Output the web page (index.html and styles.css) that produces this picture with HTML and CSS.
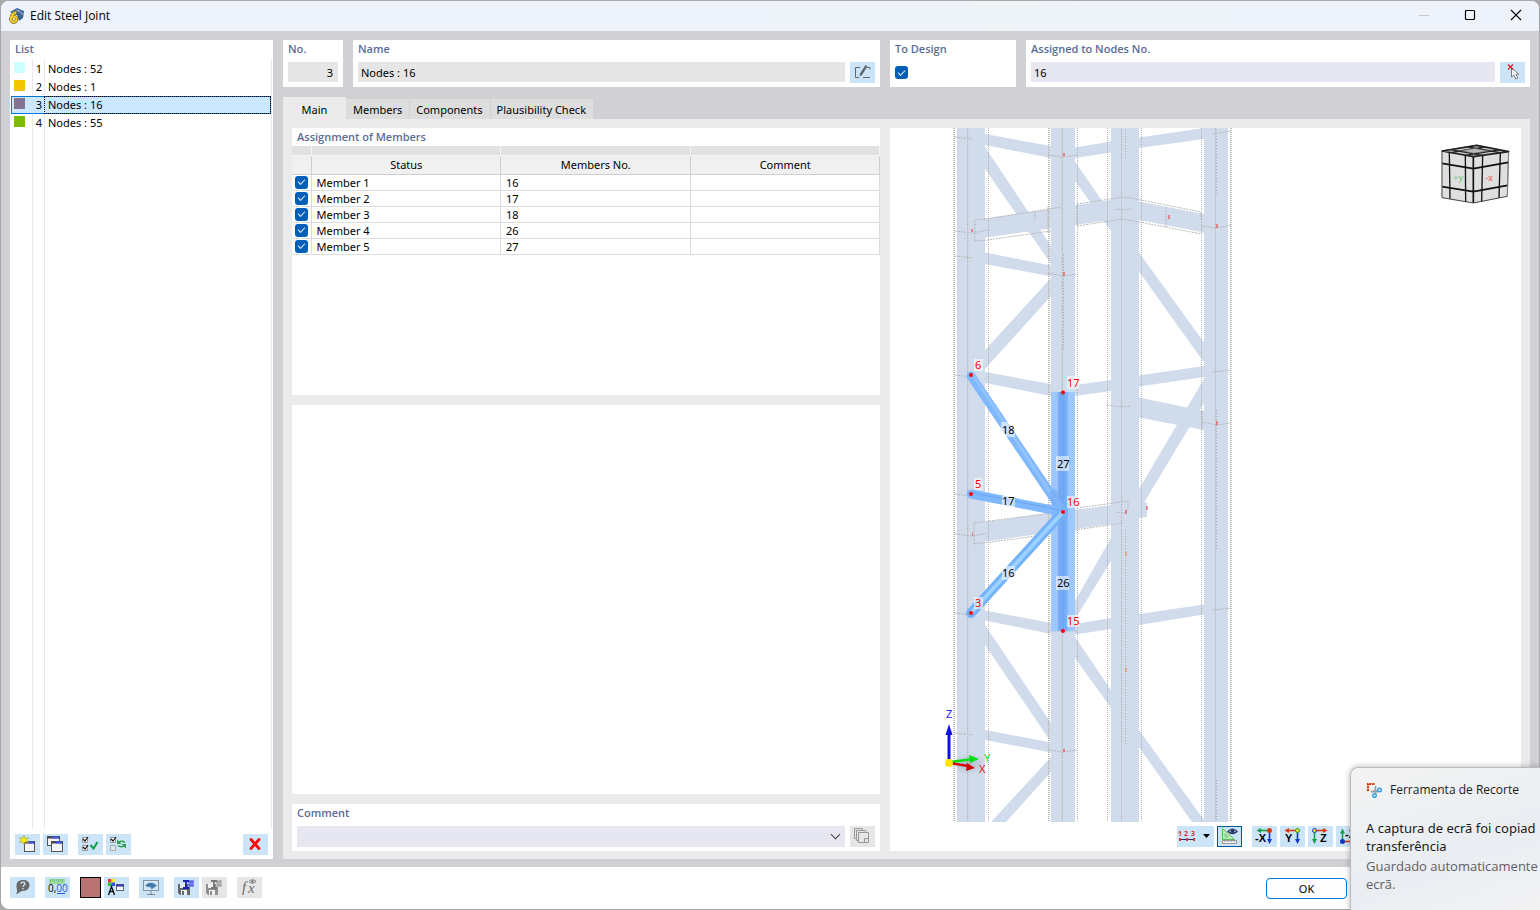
FILE: index.html
```html
<!DOCTYPE html>
<html lang="en">
<head>
<meta charset="utf-8">
<title>Edit Steel Joint</title>
<link rel="stylesheet" href="styles.css">
</head>
<body>
<main class="window">
  <header class="titlebar">
    <svg class="app-icon" viewBox="0 0 16 16" aria-hidden="true">
      <path d="M1 4 8 0l7 3-1 7-4 3-2-6z" fill="#3f6390"/>
      <path d="M4 4q6-3 9 3M7 2q5 0 7 4" fill="none" stroke="#9ab8d4" stroke-width=".8"/>
      <path d="M6.500 4.500Q2 6.500 2 11" fill="none" stroke="#6b5708" stroke-width="3.200" stroke-linecap="round"/>
      <circle cx="4.800" cy="11.300" r="2.800" fill="none" stroke="#6b5708" stroke-width="3.200"/>
      <path d="M6.500 4.500Q2 6.500 2 11" fill="none" stroke="#f5cf2a" stroke-width="2" stroke-linecap="round"/>
      <circle cx="4.800" cy="11.300" r="2.800" fill="none" stroke="#f5cf2a" stroke-width="2"/>
    </svg>
    <h1 class="title">Edit Steel Joint</h1>
    <div class="window-buttons">
      <button class="win-btn" aria-label="Minimize" disabled><svg viewBox="0 0 12 12"><path d="M1 5.500h10" stroke="#c3c6cb" fill="none"/></svg></button>
      <button class="win-btn" aria-label="Maximize"><svg viewBox="0 0 12 12"><rect x="1.500" y="0.500" width="9" height="9" rx="1" stroke="#000" stroke-width="1.200" fill="none"/></svg></button>
      <button class="win-btn" aria-label="Close"><svg viewBox="0 0 12 12"><path d="M1 0l10 10M11 0 1 10" stroke="#000" stroke-width="1.100" fill="none"/></svg></button>
    </div>
  </header>

  <div class="body">
    <section class="panel list-panel">
      <h2 class="label">List</h2>
      <ul class="joint-list">
        <li class="joint"><span class="swatch cyan"></span><span class="num">1</span><span class="name">Nodes : 52</span></li>
        <li class="joint"><span class="swatch amber"></span><span class="num">2</span><span class="name">Nodes : 1</span></li>
        <li class="joint selected"><span class="swatch violet"></span><span class="num">3</span><span class="name">Nodes : 16</span></li>
        <li class="joint"><span class="swatch green"></span><span class="num">4</span><span class="name">Nodes : 55</span></li>
      </ul>
      <div class="list-tools">
        <button class="tool" aria-label="New"><svg viewBox="0 0 25 21"><rect x="9.500" y="7.500" width="10" height="10" fill="#f4f5f7" stroke="#555"/><path d="M9 8.500h11" stroke="#444" stroke-width="2"/><path d="M13 8.500h6" stroke="#4055ef" stroke-width="2"/><path d="M9 1.500l1 3 3.500-.8L11.300 6l2.200 2.500-3.500-.7L9 10.500l-1.200-2.700-3.300.7L6.500 6 4.500 3.700l3.300.7z" fill="#fff200" stroke="#9a9720" stroke-width=".6"/></svg></button>
        <button class="tool gap-after" aria-label="Copy"><svg viewBox="0 0 25 21"><rect x="4.500" y="2.500" width="12" height="9" fill="#f4f5f7" stroke="#555"/><path d="M4 3.500h13" stroke="#444" stroke-width="2"/><path d="M9 3.500h7" stroke="#4055ef" stroke-width="2"/><rect x="8.500" y="7.500" width="11" height="10" fill="#f4f5f7" stroke="#555"/><path d="M8 8.500h12" stroke="#444" stroke-width="2"/><path d="M13 8.500h6" stroke="#4055ef" stroke-width="2"/></svg></button>
        <button class="tool" aria-label="Select all"><svg viewBox="0 0 25 21"><path d="M4.500 3.500h5v5h-5zM4.500 11.500h5v5h-5z" fill="#fff" stroke="#999"/><path d="M5 5l2 2 3-4M5 13l2 2 3-4" fill="none" stroke="#111" stroke-width="1.200"/><path d="M12.500 11l3 3.500L19.500 8" fill="none" stroke="#12a04b" stroke-width="2"/></svg></button>
        <button class="tool" aria-label="Invert selection"><svg viewBox="0 0 25 21"><path d="M4.500 3.500h5v5h-5z" fill="#fff" stroke="#999"/><path d="M4.500 11.500h5v5h-5z" fill="#dcebf6" stroke="#aaa"/><path d="M5 5l2 2 3-4" fill="none" stroke="#111" stroke-width="1.200"/><path d="M12.500 8.500q3-2.500 6.500 0M18.500 11.500q-3 2.500-6.500 0" fill="none" stroke="#2aa04b" stroke-width="1.500"/><path d="M11 5.500v4.500h4.500zM20 14.500V10h-4.500z" fill="#2aa04b"/></svg></button>
        <button class="tool push-right" aria-label="Delete"><svg viewBox="0 0 25 21"><path d="M8 5.500l8 9M16 5.500l-8 9" stroke="#f00c0c" stroke-width="2.800" fill="none" stroke-linecap="round"/></svg></button>
      </div>
    </section>

    <div class="editor">
      <div class="fields">
        <div class="fields-left">
          <div class="panel field no-field">
            <label class="label" for="no">No.</label>
            <input class="box read right" id="no" value="3" readonly>
          </div>
          <div class="panel field grow">
            <label class="label" for="name">Name</label>
            <div class="row">
              <input class="box read grow" id="name" value="Nodes : 16" readonly>
              <button class="tool" aria-label="Edit name"><svg viewBox="0 0 25 21"><path d="M10 5.500H5.500v10H9M13 15.500h7M17 5.500h3v2" fill="none" stroke="#666"/><path d="M15.500 3l2 1.300-5.500 8.700-2.500 1.500.5-3z" fill="#5d666d"/></svg></button>
            </div>
          </div>
        </div>
        <div class="fields-right">
          <div class="panel field design-field">
            <label class="label" for="design">To Design</label>
            <div class="row"><input class="check" type="checkbox" id="design" checked></div>
          </div>
          <div class="panel field grow">
            <label class="label" for="nodes">Assigned to Nodes No.</label>
            <div class="row">
              <input class="box edit grow" id="nodes" value="16">
              <button class="tool" aria-label="Pick nodes"><svg viewBox="0 0 25 21"><path d="M11.500 5.500v9.500l2.300-2 2 4 2-1-2-3.800h3z" fill="#fff" stroke="#777"/><path d="M8 2.500l5 5M13 2.500l-5 5" stroke="#e02020" stroke-width="1.300"/></svg></button>
            </div>
          </div>
        </div>
      </div>

      <div class="tabs" role="tablist">
        <button class="tab active" role="tab" aria-selected="true">Main</button>
        <button class="tab" role="tab">Members</button>
        <button class="tab" role="tab">Components</button>
        <button class="tab" role="tab">Plausibility Check</button>
      </div>

      <div class="page">
        <div class="page-left">
          <section class="panel assign">
            <h2 class="label">Assignment of Members</h2>
            <table class="members">
              <thead>
                <tr class="strip"><td></td><td></td><td></td><td></td></tr>
                <tr class="heads"><th class="tick"></th><th>Status</th><th>Members No.</th><th>Comment</th></tr>
              </thead>
              <tbody>
                <tr><td class="tick"><input class="check" type="checkbox" id="m1" checked></td><td><label for="m1">Member 1</label></td><td>16</td><td></td></tr>
                <tr><td class="tick"><input class="check" type="checkbox" id="m2" checked></td><td><label for="m2">Member 2</label></td><td>17</td><td></td></tr>
                <tr><td class="tick"><input class="check" type="checkbox" id="m3" checked></td><td><label for="m3">Member 3</label></td><td>18</td><td></td></tr>
                <tr><td class="tick"><input class="check" type="checkbox" id="m4" checked></td><td><label for="m4">Member 4</label></td><td>26</td><td></td></tr>
                <tr><td class="tick"><input class="check" type="checkbox" id="m5" checked></td><td><label for="m5">Member 5</label></td><td>27</td><td></td></tr>
              </tbody>
            </table>
          </section>
          <section class="panel blank"></section>
          <section class="panel field">
            <label class="label" for="comment">Comment</label>
            <div class="row combo-row">
              <select class="box edit grow combo" id="comment"><option></option></select>
              <button class="tool off" aria-label="Comment library" disabled><svg viewBox="0 0 25 21"><g fill="#e6e6e6" stroke="#979797"><path d="M4.500 2.500h8v10h-8z"/><path d="M6.500 4.500h9v10h-9z"/><path d="M8.500 6.500h10v10h-10z"/><path d="M14.500 16v-3.500h4" fill="none"/></g></svg></button>
            </div>
          </section>
        </div>

        <section class="panel view">
          <svg class="scene" viewBox="890 128 631 694" role="img" aria-label="3D model of the joint">
            <defs>
              <linearGradient id="vert"><stop offset="0" stop-color="#a0c9ff"/><stop offset=".28" stop-color="#9cc5fd"/><stop offset=".3" stop-color="#78aef8"/><stop offset=".5" stop-color="#72a8f4"/><stop offset=".68" stop-color="#7db3fb"/><stop offset=".72" stop-color="#9cc6ff"/><stop offset="1" stop-color="#a0c9ff"/></linearGradient>
              <radialGradient id="glow"><stop offset="0" stop-color="#8796a8" stop-opacity=".5"/><stop offset="1" stop-color="#8796a8" stop-opacity="0"/></radialGradient>
            </defs>
            <g fill="#d0dcec">
              <path d="M957 128h28v694h-28zM1051 128h24v694h-24zM1111 128h28v694h-28zM1204 128h24v694h-24z"/>
              <path d="M985 134l66 12v12l-66-13z"/>
              <path d="M1075 147.500l36-6 28-4 65-9.500v11l-65 9-28 4.500-36 5.500z"/>
              <path d="M985 147l66 99v18l-66-95z"/>
              <path d="M1075 161.500l36 52.500v17l-36-50z"/>
              <path d="M985 218.500l126-18.500v20l-126 17.500z"/>
              <path d="M1139 201.500l65 12.500v18.500l-65-12.500z"/>
              <path d="M985 252.500l66 13v11l-66-12.500z"/>
              <path d="M1051 278v18l-66 73v-19z"/>
              <path d="M1139 252.500l65 90v20l-65-91z"/>
              <path d="M985 372l66 12v12l-66-13z"/>
              <path d="M1075 385l36-5 28-4.500 65-9.500v11l-65 9.500-28 4.500-36 5z"/>
              <path d="M1139 397.500l65 13.500v19l-65-12.500z"/>
              <path d="M1204 379v24l-65 108v-22z"/>
              <path d="M1111 538v23l-36 58v-18z"/>
              <path d="M985 522l126-17v19l-126 17.500z"/>
              <path d="M1139 500l8 3v14l-8 1z"/>
              <path d="M985 610.500l66 12.500v11l-66-13.500z"/>
              <path d="M1075 624l36-6 28-4 65-9.500v10l-65 10.500-28 4-36 5.500z"/>
              <path d="M985 625l66 98v19l-66-97z"/>
              <path d="M1075 637l36 53v18l-36-50z"/>
              <path d="M985 730l66 12.500v10l-66-12.500z"/>
              <path d="M1051 757v15l-45 50h-15z"/>
              <path d="M1139 730l65 90v2h-12l-53-75z"/>
            </g>
            <g fill="none" stroke="#b0b0b0" stroke-dasharray="1 1">
              <path d="M954.500 128v694M967.500 128v694M988.500 128v694M1048.500 128v694M1062.500 128v694M1077.500 128v694M1107.500 128v694M1121.500 128v694M1141.500 128v694M1201.500 128v694M1215.500 128v694M1230.500 128v694"/>
              <path d="M968.500 128v694M1061.500 128v694M953.500 128v694M1231.500 128v694M1049.500 128v694" stroke="#d0d0d0"/>
            </g>
            <g fill="none" stroke="#aaa" stroke-dasharray="1 2">
              <path d="M1125.500 530v215M1125.500 130v30M1216.500 130v65M1063.500 255v95M1216.500 410v140M1216.500 780v42"/>
            </g>
            <g fill="none" stroke="#b8b8b8" stroke-dasharray="2 1">
              <path d="M955 137l18 2M1048 155l15 2 14-2M1213 134l18-3M955 231l17 2 16-3M955 256l18 2M1048 273l15 3 14-2M1202 226l15 2 14-3M1115 209l9 1 8-1M955 375l16 2M1107 405l14 2 10-1M1202 422l15 3 14-2M1213 372l18-2M955 494l14 2M955 534l17 2 16-3M955 613l16 2M1048 631h29M1213 610l18-2M955 733l18 2M1048 750l15 2 14-2"/>
              <path d="M975 241v-21l11-1 76-12M975 241l12-1 64-9M1077 204l46-7 8 1 70 14v9M1077 226l46-7 79 15M1035 211v10M1166 207v20M1048 207v26M1077 204v22"/>
              <path d="M974 544v-21l78-10M974 544l48-6 100-15M1077 508l51-7v8l-4 4-8-1M1202 410v20"/>
            </g>
            <g fill="#f05050" opacity=".65">
              <path d="M1063 153h2v3h-2zM971 229h2v3h-2zM1168 215h2v4h-2zM1216 224h2v4h-2zM1063 272h2v4h-2zM1216 421h2v4h-2zM972 532h1v4h-1zM1146 506h2v4h-2zM1125 510h2v4h-2zM1063 749h2v3h-2zM1068 518h2v3h-2z"/>
              <path d="M1125 552h2v4h-2zM1125 668h2v4h-2z" fill="#f08a50"/>
            </g>
            <path d="M1051 392h24v239h-24z" fill="url(#vert)"/>
            <path d="M1060.500 392v239M1063.500 392v239" stroke="#6598de" stroke-dasharray="1 1" opacity=".6"/>
            <g fill="none" stroke-linecap="round">
              <path d="M971 376l92 136" stroke="#80b8ff" stroke-width="9"/>
              <path d="M973 375l90 137" stroke="#92c3ff" stroke-width="3"/>
              <path d="M1054 494l9 18" stroke="#71a8f2" stroke-width="10" opacity=".5"/>
              <path d="M971 494l92 18" stroke="#80b8ff" stroke-width="9"/>
              <path d="M973 493l87 17" stroke="#6aa3ee" stroke-width="1"/>
              <path d="M971 613l92-101" stroke="#75b2fa" stroke-width="10"/>
              <path d="M971 613l92-101" stroke="#9bd2ff" stroke-width="4"/>
            </g>
            <g fill="#fff" opacity=".55">
              <path d="M974 359h9v12h-9zM1067 376h12v13h-12zM974 478h9v12h-9zM1067 496h12v12h-12zM974 597h9v12h-9zM1067 615h12v12h-12z"/>
              <path d="M1001 422h14v15h-14zM1056 456h13v15h-13zM1002 496h13v12h-13zM1002 566h13v14h-13zM1056 576h13v14h-13z"/>
            </g>
            <g fill="#f00">
              <circle cx="971" cy="375" r="2"/><circle cx="1063" cy="392.500" r="2"/><circle cx="971" cy="494" r="2"/><circle cx="1063" cy="512" r="2"/><circle cx="971" cy="613" r="2"/><circle cx="1063" cy="631" r="2"/>
            </g>
            <g class="node-no">
              <text x="975" y="369">6</text><text x="1067" y="387">17</text><text x="975" y="488">5</text><text x="1067" y="506">16</text><text x="975" y="607">3</text><text x="1067" y="625">15</text>
            </g>
            <g class="member-no">
              <text x="1002" y="434">18</text><text x="1057" y="468">27</text><text x="1002" y="505">17</text><text x="1002" y="577">16</text><text x="1057" y="587">26</text>
            </g>
            <g class="axes">
              <ellipse cx="968" cy="764" rx="19" ry="10" fill="url(#glow)"/>
              <path d="M949 762v-32" stroke="#1010e0" stroke-width="3"/>
              <path d="M949 724l3.500 11h-7z" fill="#1010e0"/>
              <path d="M950 762l20-2.500" stroke="#00e010" stroke-width="2.500"/>
              <path d="M979 759l-9 4-1-8z" fill="#00e010"/>
              <path d="M950 763l18 3" stroke="#d00808" stroke-width="2.500"/>
              <path d="M975 768l-9 3 1-8z" fill="#d00808"/>
              <circle cx="949" cy="763" r="4" fill="#ffe600"/>
              <text x="946" y="718" fill="#2020f0">Z</text>
              <text x="984" y="762" fill="#10e020">Y</text>
              <text x="979" y="773" fill="#f01010">X</text>
            </g>
            <g transform="translate(1430 135) scale(.3333)" stroke-linejoin="round">
              <path d="M36 48 140 31l96 19-4 134-102 20-94-16z" fill="#dfdfdf" stroke="#444" stroke-width="3"/>
              <path d="M36 48 140 31l96 19-106 15z" fill="#c9c9c9" stroke="#222" stroke-width="5"/>
              <path d="M62 44l94 17M113 36l98 17M62 53l103-17M108 61l103-17" stroke="#222" stroke-width="4" fill="none"/>
              <path d="M92 47l43-7 43 8-48 7z" fill="#bbb" stroke="#444" stroke-width="2"/>
              <path d="M58 53l2 138M106 61l1 139M158 61l-3 138M211 54l-4 134" stroke="#111" stroke-width="4" fill="none"/>
              <path d="M130 65v138M36 85l94 16 105-19M36 155l94 15 103-19" stroke="#111" stroke-width="5" fill="none"/>
              <path d="M36 50v138M236 51l-4 132" stroke="#999" stroke-width="2" fill="none"/>
              <text x="70" y="139" class="face plus">+y</text>
              <text x="166" y="139" class="face minus">-x</text>
            </g>
          </svg>
          <div class="view-tools">
            <button class="tool wide" aria-label="Numbering"><svg viewBox="0 0 37 21"><g class="tiny"><text x="1" y="10">1</text><text x="7" y="10">2</text><text x="14" y="10">3</text></g><path d="M3 13.500h14" stroke="#2a2a70"/><path d="M2 12h2v3H2zM9 12h2v3H9zM16 12h2v3h-2z" fill="#e03030"/><path d="M26 8h7l-3.500 4z" fill="#000"/></svg></button>
            <button class="tool pressed gap-after" aria-label="Show dimensions"><svg viewBox="0 0 25 21"><path d="M5.500 2.500v11h12z" fill="#b8efb0" stroke="#62b562"/><path d="M8 8v3h3z" fill="#cce4f7" stroke="#62b562" stroke-width=".7"/><path d="M5.500 14.500h14v3h-14z" fill="#f2f2f2" stroke="#999"/><path d="M8 14v2M11 14v2M14 14v2M17 14v2" stroke="#999"/><path d="M11 5.500q4.500-5 9 0-4.500 4-9 0z" fill="#d4def2" stroke="#263060" stroke-width="1.200"/><circle cx="15.500" cy="5" r="2" fill="#263060"/></svg></button>
            <button class="tool" aria-label="View -X"><svg viewBox="0 0 25 21"><path d="M17 4.500H9" stroke="#12a04b" stroke-width="1.600"/><path d="M4.500 4.500 9 2v5z" fill="#12a04b"/><path d="M17.500 6v8" stroke="#1038c8" stroke-width="1.600"/><path d="M17.500 18 15 13h5z" fill="#1038c8"/><circle cx="17.500" cy="4.500" r="2.500" fill="#d83a10"/><text class="glyph" x="3" y="16">-X</text></svg></button>
            <button class="tool" aria-label="View Y"><svg viewBox="0 0 25 21"><path d="M17 4.500H9" stroke="#d83a10" stroke-width="1.600"/><path d="M4.500 4.500 9 2v5z" fill="#d83a10"/><path d="M17.500 6v8" stroke="#1038c8" stroke-width="1.600"/><path d="M17.500 18 15 13h5z" fill="#1038c8"/><circle cx="17.500" cy="4.500" r="2" fill="#f5e020" stroke="#12a04b"/><text class="glyph" x="5" y="16">Y</text></svg></button>
            <button class="tool" aria-label="View Z"><svg viewBox="0 0 25 21"><path d="M8 4.500h7" stroke="#d83a10" stroke-width="1.600"/><path d="M19.500 4.500 15 2v5z" fill="#d83a10"/><path d="M6.500 6v8" stroke="#12a04b" stroke-width="1.600"/><path d="M6.500 18 4 13h5z" fill="#12a04b"/><circle cx="6.500" cy="4.500" r="2" fill="#f5e020" stroke="#1038c8"/><text class="glyph" x="12" y="16">Z</text></svg></button>
            <button class="tool" aria-label="View -Z"><svg viewBox="0 0 25 21"><path d="M8 15.500h12" stroke="#d83a10" stroke-width="1.600"/><path d="M6.500 6v8" stroke="#12a04b" stroke-width="1.600"/><path d="M6.500 2.500 4 7.500h5z" fill="#12a04b"/><circle cx="6.500" cy="15.500" r="2.500" fill="#1038c8"/><text class="glyph" x="9" y="12">-Z</text></svg></button>
          </div>
        </section>
      </div>
    </div>
  </div>

  <footer class="footer">
    <button class="tool gap-after" aria-label="Help"><svg viewBox="0 0 25 21"><path d="M13 3c4 0 6.500 2 6.500 5S17 14 13 14q-2 0-3 1-1.500 1.500-4 2 1.500-2 1-4-.5-2.500-.5-4C6.500 5 9 3 13 3z" fill="#67696c"/><path d="M10.800 7q.3-1.800 2.200-1.800 2 0 2 1.600 0 1-1.200 1.600-.8.500-.8 1.600M13 11v1.500" fill="none" stroke="#dcebf6" stroke-width="1.200"/></svg></button>
    <button class="tool gap-after" aria-label="Units"><svg viewBox="0 0 25 21"><path d="M4 2h16v5H4z" fill="#9bdc9b"/><path d="M5.500 2v3M7.500 2v2M9.500 2v3M11.500 2v2M13.500 2v3M15.500 2v2M17.500 2v3" stroke="#6fc07c"/><text class="units" x="3" y="15">0,<tspan fill="#2456d8">00</tspan></text><path d="M12 16.500h8" stroke="#2456d8"/></svg></button>
    <button class="tool color" aria-label="Color"></button>
    <button class="tool gap-after" aria-label="Display properties"><svg viewBox="0 0 25 21"><path d="M4 2h3.500v3.500H4z" fill="#f03030"/><path d="M7.500 2H11v3.500H7.500z" fill="#f2e820"/><path d="M4 5.500h3.500V9H4z" fill="#30c040"/><path d="M7.500 5.500H11V9H7.500z" fill="#3050f0"/><path d="M4.500 18 7.500 9.500l3 8.500M5.500 14.500h4" fill="none" stroke="#111" stroke-width="1.400"/><rect x="12.500" y="7.500" width="7" height="6" fill="#f4f5f7" stroke="#667"/><path d="M12 8.500h8" stroke="#3038a0" stroke-width="2"/></svg></button>
    <button class="tool gap-after" aria-label="View settings"><svg viewBox="0 0 25 21"><rect x="4.500" y="3.500" width="15" height="10" fill="#d6e8f6" stroke="#8792a0"/><path d="M6 8.500q6-6 12 0l-2 1.500-3.500 2.500q0-3-4-2.500z" fill="#4d86b8"/><path d="M8 8q4-2 7 2" stroke="#305878" fill="none" stroke-width=".8"/><path d="M12 14v3M8 17.500h8" stroke="#7b8690"/></svg></button>
    <button class="tool" aria-label="Save as default"><svg viewBox="0 0 25 21"><path d="M4 7h10l2 2v9H6l-2-2z" fill="#65676a"/><path d="M7 13h6v5H7zM6 7h5v4H6z" fill="#e4eef6"/><path d="M8 14h2v4H8z" fill="#65676a"/><path d="M14 3h6v7h-6z" fill="#7c8cf0"/><path d="M9 4h6M9 11h6M12 4v7" stroke="#1a20b8" stroke-width="1.800"/><path d="M15 5h4M15 8h4" stroke="#3b48d8"/></svg></button>
    <button class="tool off gap-after" aria-label="Load default" disabled><svg viewBox="0 0 25 21"><path d="M4 7h10l2 2v9H6l-2-2z" fill="#8e8e8e"/><path d="M7 13h6v5H7zM6 7h5v4H6z" fill="#f0f0f0"/><path d="M8 14h2v4H8z" fill="#8e8e8e"/><path d="M14 3h6v7h-6z" fill="#bcbcbc"/><path d="M9 4h6M9 11h6M12 4v7" stroke="#777" stroke-width="1.800"/><path d="M15 5h4M15 8h4" stroke="#8b8b8b"/></svg></button>
    <button class="tool off" aria-label="Formula" disabled><svg viewBox="0 0 25 21"><text class="fx" x="5" y="15">f</text><text class="fx" x="11" y="16">x</text><path d="M12 4.500q3.500-3.500 7 0-3.500 3.500-7 0z" fill="none" stroke="#7c7c7c"/><circle cx="15.500" cy="4.500" r="1.300" fill="#7c7c7c"/></svg></button>
    <button class="ok">OK</button>
  </footer>
</main>

<aside class="toast" role="status">
  <div class="toast-head">
    <svg class="snip" viewBox="0 0 16 16" aria-hidden="true"><path d="M2 9V2h7" fill="none" stroke="#d83b01" stroke-width="2.200" stroke-dasharray="2 .7"/><path d="M9.500 4v7.500M5 9.500h7" stroke="#9a9fa5" stroke-width="1.800"/><circle cx="13.500" cy="8" r="1.800" fill="none" stroke="#2a9fe0" stroke-width="1.400"/><circle cx="8.500" cy="13.500" r="1.800" fill="none" stroke="#2a9fe0" stroke-width="1.400"/></svg>
    <span>Ferramenta de Recorte</span>
  </div>
  <p class="toast-text">A captura de ecrã foi copiad<br>transferência</p>
  <p class="toast-note">Guardado automaticamente<br>ecrã.</p>
</aside>
</body>
</html>
```
FILE: styles.css
```css
* { box-sizing: border-box; }

body {
  margin: 0;
  min-height: 100vh;
  display: flex;
  background: #a8a8ab;
  padding: 1px;
  overflow: hidden;
  position: relative;
  font: 11px/16px "Noto Sans", "Open Sans", sans-serif;
  color: #000;
}

h1, h2, p, ul { margin: 0; padding: 0; font-size: inherit; font-weight: inherit; }
button, input, select { font: inherit; color: inherit; margin: 0; border: 0; padding: 0; border-radius: 0; }

.window {
  flex: 1;
  min-width: 0;
  display: flex;
  flex-direction: column;
  border-radius: 8px;
  overflow: hidden;
  background: #fff;
}

.titlebar {
  height: 30px;
  display: flex;
  align-items: center;
  gap: 5px;
  padding-left: 8px;
  background: linear-gradient(90deg, #eef2fa, #eef2fa 50%, #eef4f8 65%, #eef2fa 80%);
}
.app-icon { width: 16px; height: 16px; overflow: visible; }
.title { font: 12px/16px "Open Sans", "Noto Sans", sans-serif; }
.window-buttons { margin-left: auto; display: flex; }
.win-btn { width: 46px; height: 30px; background: none; display: flex; align-items: center; justify-content: center; }
.win-btn svg { width: 12px; height: 12px; overflow: visible; }

.body {
  flex: 1;
  min-height: 0;
  display: flex;
  gap: 10px;
  padding: 9px 9px 8px;
  background: #d1d0d5;
}

.panel { background: #fff; }
.label {
  display: block;
  height: 19px;
  padding: 0 5px;
  line-height: 17px;
  font-family: "Open Sans", "Noto Sans", sans-serif;
  font-weight: 600;
  color: #5a6c96;
}

.list-panel { width: 263px; display: flex; flex-direction: column; padding-bottom: 4px; }
.joint-list {
  flex: 1;
  list-style: none;
  padding-top: 1px;
  margin: 0 1px;
  background: linear-gradient(#eaeaea, #eaeaea) 21px 0 / 1px 100% no-repeat,
    linear-gradient(#eaeaea, #eaeaea) 33px 0 / 1px 100% no-repeat,
    linear-gradient(#eaeaea, #eaeaea) 260px 0 / 1px 100% no-repeat;
}
.joint { display: grid; grid-template-columns: 20px 13px 1fr; height: 18px; line-height: 16px; border: 1px solid transparent; margin-right: 1px; }
.joint .swatch { width: 11px; height: 11px; margin: 1px 0 0 2px; }
.joint .num { text-align: right; padding-right: 3px; }
.joint .name { padding-left: 3px; height: 16px; }
.joint.selected { background: #cce8ff; border-color: #0078d7; }
.joint.selected .name { outline: 1px dotted #000; }
.cyan { background: #ccffff; }
.amber { background: #f5c400; }
.violet { background: #847291; }
.green { background: #7bbb00; }
.list-tools { display: flex; gap: 3px; padding: 5px 5px 0; }

.tool { width: 25px; height: 21px; flex: none; background: #cce4f7; display: block; }
.tool svg { display: block; width: 100%; height: 100%; }
.tool.off { background: #e6e6e6; }
.tool.wide { width: 37px; }
.tool.pressed { outline: 1px solid #005499; outline-offset: -1px; }
.tool.gap-after { margin-right: 7px; }
.tool.push-right { margin-left: auto; }
.tool.color { width: 21px; background: #b97272; border: 1px solid #000; }

.editor { flex: 1; min-width: 0; display: flex; flex-direction: column; }
.fields { display: grid; grid-template-columns: 597fr 640fr; gap: 10px; }
.fields-left, .fields-right { display: flex; gap: 10px; min-width: 0; }
.grow { flex: 1; min-width: 0; }
.field { height: 47px; }
.field .label { height: 22px; }
.row { display: flex; gap: 5px; padding: 0 5px; }
.box { height: 20px; padding: 1px 3px 0; }
.read { background: #e6e6e6; }
.edit { background: #e7e7f2; }
.right { text-align: right; }
.no-field { width: 60px; }
.no-field .box { width: 50px; margin: 0 5px; padding-right: 5px; display: block; }
.design-field { width: 126px; }

.check {
  appearance: none;
  width: 13px;
  height: 13px;
  flex: none;
  border-radius: 3px;
  background: #005fb8;
  display: grid;
  place-items: center;
}
.check::after {
  content: "";
  width: 6px;
  height: 3px;
  border: solid #d8e8f6;
  border-width: 0 0 1px 1px;
  transform: translateY(-1px) rotate(-45deg);
}
.design-field .check { margin-top: 4px; }

.tabs { display: flex; align-items: flex-end; margin-top: 10px; height: 22px; }
.tab { height: 20px; padding: 2px 7px 0; background: #dddddd; }
.tab + .tab + .tab { border-left: 1px solid #d1d0d5; padding-left: 6px; }
.tab.active { height: 22px; width: 63px; background: #ebebeb; padding: 4px 7px 0; }

.page {
  flex: 1;
  min-height: 0;
  display: grid;
  grid-template-columns: 588fr 631fr;
  gap: 10px;
  padding: 9px 9px 8px;
  background: #ebebeb;
}
.page-left { display: grid; grid-template-rows: 267fr 389fr 47px; gap: 10px; min-width: 0; }

.assign .label { height: 18px; }
.members { width: 100%; border-collapse: collapse; table-layout: fixed; }
.members th, .members td { border-right: 1px solid #dcdcdc; border-bottom: 1px solid #dcdcdc; padding: 0 4px 0 5px; height: 16px; line-height: 15px; }
.members .strip td { height: 9px; background: #e1e1e1; border-color: #f5f5f5; }
.members .strip td:first-child { width: 19px; padding: 0; }
.members .heads th { height: 19px; font-weight: 400; background: #f0f0f0; border-color: #cfcfcf; }
.members .tick { padding: 0 3px; }

.combo { appearance: none; height: 21px; }
.combo-row { position: relative; }
.combo-row::after {
  content: "";
  position: absolute;
  right: 41px;
  top: 5px;
  width: 6px;
  height: 6px;
  border: solid #444;
  border-width: 0 1px 1px 0;
  transform: rotate(45deg);
  pointer-events: none;
}

.view { display: flex; flex-direction: column; min-width: 0; min-height: 0; }
.scene { flex: 1; min-height: 0; width: 100%; display: block; }
.scene text { font: 11px "Noto Sans", "Open Sans", sans-serif; }
.node-no { fill: #f00; }
.scene .face { font: 700 26px "Open Sans", sans-serif; }
.plus { fill: #8fcf96; }
.minus { fill: #e88a8a; }
.view-tools { display: flex; gap: 3px; justify-content: flex-end; padding: 4px 160px 4px 0; }
.glyph { font: 700 11px "Liberation Sans", sans-serif; }
.tiny { font: 700 7px "Open Sans", sans-serif; fill: #e03030; }
.units { font: 10px "Open Sans", sans-serif; }
.fx { font: italic 15px "Liberation Serif", serif; fill: #6a6a6a; }

.footer { height: 42px; display: flex; align-items: flex-start; gap: 3px; padding: 10px 192px 0 9px; }
.ok { width: 81px; height: 21px; margin: 1px 0 0 auto; background: #fdfdfd; border: 1px solid #0078d4; border-radius: 4px; }

.toast {
  position: absolute;
  right: 0;
  bottom: 0;
  width: 190px;
  height: 143px;
  padding: 14px 0 0 15px;
  overflow: hidden;
  white-space: nowrap;
  border: 1px solid #b9bbbe;
  border-width: 1px 0 0 1px;
  border-radius: 8px 0 0 0;
  background: linear-gradient(160deg, #f3f3f2, #e9edf2 60%, #f2f2f3);
  box-shadow: 0 0 6px rgba(0, 0, 0, .3);
  font: 13px/18px "Noto Sans", "Open Sans", sans-serif;
  color: #1b1b1b;
}
.toast-head { display: flex; gap: 8px; align-items: center; font: 12px/16px "Open Sans", sans-serif; }
.snip { width: 16px; height: 16px; }
.toast-text { margin-top: 21px; }
.toast-note { margin-top: 2px; color: #5f6062; font-family: "Open Sans", sans-serif; }
```
